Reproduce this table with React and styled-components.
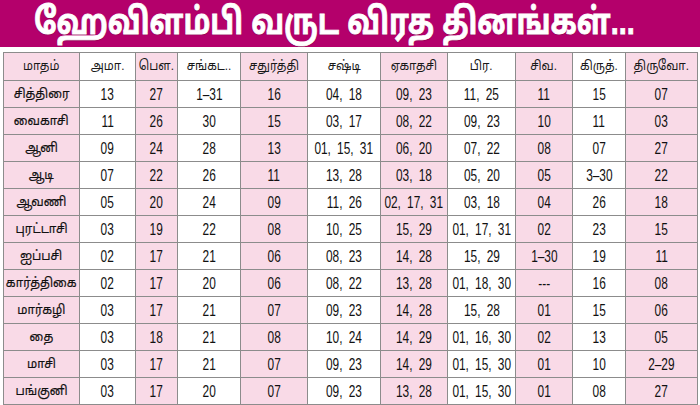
import React from "react";
import styled, { createGlobalStyle } from "styled-components";

const GlobalStyle = createGlobalStyle`
  html, body {
    margin: 0;
    padding: 0;
    background: #ffffff;
  }
  body {
    width: 700px;
    height: 405px;
    overflow: hidden;
    font-family: "Liberation Sans", "Noto Sans Tamil", "Noto Sans", sans-serif;
  }
`;

const Page = styled.div`
  width: 700px;
  height: 405px;
  display: flex;
  flex-direction: column;
  background: #ffffff;
`;

const TitleBar = styled.div`
  height: 47px;
  background: #b4006b;
  display: flex;
  align-items: center;
  padding-left: 34px;
  color: #ffffff;
  font-size: 36px;
  font-weight: bold;
  white-space: nowrap;
  overflow: hidden;
`;

const TitleText = styled.span`
  display: inline-block;
  transform: scaleX(0.8);
  transform-origin: left center;
  -webkit-text-stroke: 0.8px #ffffff;
  text-shadow: 0 1px 1px rgba(80, 0, 40, 0.5);
`;

const TableWrap = styled.div`
  padding: 5px 3px 0 3px;
`;

const Table = styled.table`
  border-collapse: collapse;
  table-layout: fixed;
  width: 694px;
  border: 1.5px solid #8c8c8c;
`;

const HeadCell = styled.th`
  height: 27px;
  padding: 0;
  font-weight: normal;
  font-size: 13.5px;
  color: #1a1a1a;
  text-align: center;
  white-space: nowrap;
  border: 1px solid #8c8c8c;
  background: ${(p) => (p.$pink ? "#f9dae7" : "#ffffff")};
`;

const Cell = styled.td`
  height: 26px;
  padding: 0;
  font-size: 16.5px;
  color: #111111;
  text-align: center;
  white-space: nowrap;
  border: 1px solid #8c8c8c;
  background: ${(p) => (p.$pink ? "#f9dae7" : "#ffffff")};
`;

const MonthCell = styled(Cell)`
  font-size: 13.5px;
  -webkit-text-stroke: 0.2px #111111;
`;

const Squeeze = styled.span`
  display: inline-block;
  margin: 0 -20px;
  transform: scaleX(${(p) => p.$sx});
  word-spacing: ${(p) => (p.$sx < 0.85 ? "4px" : "0")};
`;

const widths = [76, 56, 42, 63, 67, 73, 67, 68, 57, 53, 72];

const headers = [
  "மாதம்",
  "அமா.",
  "பௌ.",
  "சங்கட..",
  "சதுர்த்தி",
  "சஷ்டி",
  "ஏகாதசி",
  "பிர.",
  "சிவ.",
  "கிருத்.",
  "திருவோ.",
];

const rows = [
  ["சித்திரை", "13", "27", "1–31", "16", "04, 18", "09, 23", "11, 25", "11", "15", "07"],
  ["வைகாசி", "11", "26", "30", "15", "03, 17", "08, 22", "09, 23", "10", "11", "03"],
  ["ஆனி", "09", "24", "28", "13", "01, 15, 31", "06, 20", "07, 22", "08", "07", "27"],
  ["ஆடி", "07", "22", "26", "11", "13, 28", "03, 18", "05, 20", "05", "3–30", "22"],
  ["ஆவணி", "05", "20", "24", "09", "11, 26", "02, 17, 31", "03, 18", "04", "26", "18"],
  ["புரட்டாசி", "03", "19", "22", "08", "10, 25", "15, 29", "01, 17, 31", "02", "23", "15"],
  ["ஐப்பசி", "02", "17", "21", "06", "08, 23", "14, 28", "15, 29", "1–30", "19", "11"],
  ["கார்த்திகை", "02", "17", "20", "06", "08, 22", "13, 28", "01, 18, 30", "---", "16", "08"],
  ["மார்கழி", "03", "17", "21", "07", "09, 23", "14, 28", "15, 28", "01", "15", "06"],
  ["தை", "03", "18", "21", "08", "10, 24", "14, 29", "01, 16, 30", "02", "13", "05"],
  ["மாசி", "03", "17", "21", "07", "09, 23", "14, 29", "01, 15, 30", "01", "10", "2–29"],
  ["பங்குனி", "03", "17", "20", "07", "09, 23", "13, 28", "01, 15, 30", "01", "08", "27"],
];

export default function App() {
  return (
    <>
      <GlobalStyle />
      <Page>
        <TitleBar>
          <TitleText>ஹேவிளம்பி வருட விரத தினங்கள்...</TitleText>
        </TitleBar>
        <TableWrap>
          <Table>
            <colgroup>
              {widths.map((w, i) => (
                <col key={i} style={{ width: w }} />
              ))}
            </colgroup>
            <thead>
              <tr>
                {headers.map((h, i) => (
                  <HeadCell key={h} $pink={i % 2 === 0}>
                    <Squeeze $sx={0.86}>{h}</Squeeze>
                  </HeadCell>
                ))}
              </tr>
            </thead>
            <tbody>
              {rows.map((r) => (
                <tr key={r[0]}>
                  {r.map((v, i) =>
                    i === 0 ? (
                      <MonthCell key={i} $pink>
                        <Squeeze $sx={0.88}>{v}</Squeeze>
                      </MonthCell>
                    ) : (
                      <Cell key={i} $pink={i % 2 === 0}>
                        <Squeeze $sx={0.72}>{v}</Squeeze>
                      </Cell>
                    )
                  )}
                </tr>
              ))}
            </tbody>
          </Table>
        </TableWrap>
      </Page>
    </>
  );
}
